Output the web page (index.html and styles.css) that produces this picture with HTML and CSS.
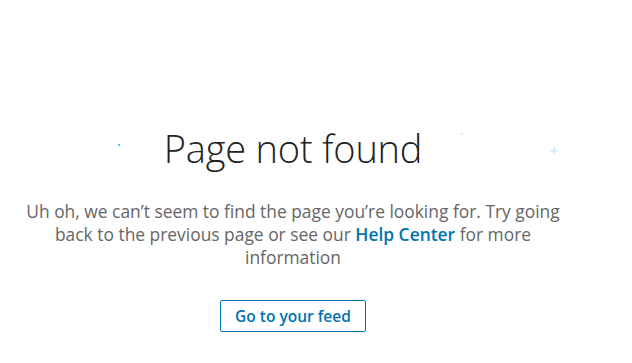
FILE: index.html
```html
<!DOCTYPE html>
<html lang="en">
<head>
<meta charset="utf-8">
<title>Page not found</title>
<link rel="stylesheet" href="styles.css">
</head>
<body>
<main class="page">
  <section class="hero">
    <span class="spark spark-a"></span>
    <span class="spark spark-b"></span>
    <span class="spark spark-c"></span>
    <span class="spark-plus">+</span>
    <h1 class="title">Page not found</h1>
  </section>
  <p class="message">Uh oh, we can’t seem to find the page you’re looking for. Try going back to the previous page or see our <a class="link" href="#">Help Center</a> for more information</p>
  <a class="btn" href="#">Go to your feed</a>
</main>
</body>
</html>
```
FILE: styles.css
```css
html, body {
  margin: 0;
  padding: 0;
  background: #fff;
}
body {
  font-family: "Open Sans", "Noto Sans", sans-serif;
  color: #666;
}
.page {
  width: 586px;
  display: flex;
  flex-direction: column;
  align-items: center;
  padding-top: 120px;
}
.hero {
  position: relative;
  width: 100%;
  display: flex;
  justify-content: center;
}
.title {
  margin: 0;
  font-weight: 300;
  font-size: 38px;
  line-height: 56px;
  color: #222;
  letter-spacing: -0.2px;
}
.spark {
  position: absolute;
  width: 2px;
  height: 2px;
  background: #5bbcf0;
}
.spark-a { left: 118px; top: 24px; }
.spark-b { left: 461px; top: 13px; background: #d5ecfa; }
.spark-c { left: 289px; top: 46px; background: #d5ecfa; }
.spark-plus {
  position: absolute;
  left: 550px;
  top: 21px;
  font-size: 14px;
  line-height: 20px;
  color: #cfe8fb;
  font-weight: 700;
}
.message {
  margin: 24px 0 0;
  width: 560px;
  text-align: center;
  font-size: 17.4px;
  line-height: 23px;
  color: #666;
}
.link {
  color: #0073b1;
  font-weight: 600;
  text-decoration: none;
}
.btn {
  margin-top: 31px;
  display: inline-block;
  box-sizing: border-box;
  width: 146px;
  height: 32px;
  line-height: 30px;
  border: 1px solid #0073b1;
  border-radius: 2px;
  color: #0073b1;
  font-size: 15.5px;
  font-weight: 600;
  text-align: center;
  text-decoration: none;
}
```
